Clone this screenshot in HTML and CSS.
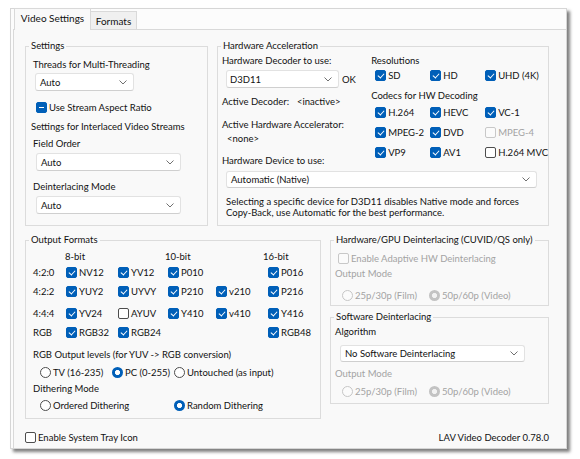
FILE: index.html
```html
<!DOCTYPE html>
<html lang="en">
<head>
<meta charset="utf-8">
<title>LAV Video Decoder</title>
<link rel="stylesheet" href="styles.css">
</head>
<body>
<div class="window">
  <div class="tabs">
    <div class="tab active">Video Settings</div>
    <div class="tab">Formats</div>
  </div>
  <div class="panel">
    <div class="row row-top">
      <fieldset class="grp g-settings">
        <legend>Settings</legend>
        <div class="lbl mt5">Threads for Multi-Threading</div>
        <div class="combo cb-threads"><span>Auto</span><svg class="chev" width="8" height="5" viewBox="0 0 8 5"><path d="M.5.5l3.5 3.5 3.5-3.5"/></svg></div>
        <div class="chk cx-aspect"><span class="box ind"></span>Use Stream Aspect Ratio</div>
        <div class="lbl sub">Settings for Interlaced Video Streams</div>
        <div class="lbl mt3">Field Order</div>
        <div class="combo cb-wide mt2"><span>Auto</span><svg class="chev" width="8" height="5" viewBox="0 0 8 5"><path d="M.5.5l3.5 3.5 3.5-3.5"/></svg></div>
        <div class="lbl mt9">Deinterlacing Mode</div>
        <div class="combo cb-wide mt2"><span>Auto</span><svg class="chev" width="8" height="5" viewBox="0 0 8 5"><path d="M.5.5l3.5 3.5 3.5-3.5"/></svg></div>
      </fieldset>

      <fieldset class="grp g-hw">
        <legend>Hardware Acceleration</legend>
        <div class="hw-top">
          <div class="hw-left">
            <div class="lbl mt1">Hardware Decoder to use:</div>
            <div class="dec-row">
              <div class="combo cb-dec"><span>D3D11</span><svg class="chev" width="8" height="5" viewBox="0 0 8 5"><path d="M.5.5l3.5 3.5 3.5-3.5"/></svg></div>
              <span class="ok">OK</span>
            </div>
            <div class="lbl mt7"><span class="k-dec">Active Decoder:</span>&lt;inactive&gt;</div>
            <div class="lbl mt9">Active Hardware Accelerator:</div>
            <div class="lbl ind5">&lt;none&gt;</div>
            <div class="lbl mt8">Hardware Device to use:</div>
          </div>
          <div class="hw-right">
            <div class="lbl mt1">Resolutions</div>
            <div class="cgrid res">
              <span class="chk"><span class="box on"></span>SD</span>
              <span class="chk"><span class="box on"></span>HD</span>
              <span class="chk"><span class="box on"></span>UHD (4K)</span>
            </div>
            <div class="lbl mt6">Codecs for HW Decoding</div>
            <div class="cgrid codecs">
              <span class="chk"><span class="box on"></span>H.264</span>
              <span class="chk"><span class="box on"></span>HEVC</span>
              <span class="chk"><span class="box on"></span>VC-1</span>
              <span class="chk"><span class="box on"></span>MPEG-2</span>
              <span class="chk"><span class="box on"></span>DVD</span>
              <span class="chk dis"><span class="box dis"></span>MPEG-4</span>
              <span class="chk"><span class="box on"></span>VP9</span>
              <span class="chk"><span class="box on"></span>AV1</span>
              <span class="chk"><span class="box"></span>H.264 MVC</span>
            </div>
          </div>
        </div>
        <div class="combo cb-dev"><span>Automatic (Native)</span><svg class="chev" width="8" height="5" viewBox="0 0 8 5"><path d="M.5.5l3.5 3.5 3.5-3.5"/></svg></div>
        <p class="desc">Selecting a specific device for D3D11 disables Native mode and forces<br>Copy-Back, use Automatic for the best performance.</p>
      </fieldset>
    </div>

    <div class="row row-bottom">
      <fieldset class="grp g-out">
        <legend>Output Formats</legend>
        <div class="orow hdr"><span class="c0"></span><span class="c1">8-bit</span><span class="c2"></span><span class="c3">10-bit</span><span class="c4"></span><span class="c5">16-bit</span></div>
        <div class="orow mt1">
          <span class="c0">4:2:0</span>
          <span class="c1 chk"><span class="box on"></span>NV12</span>
          <span class="c2 chk"><span class="box on"></span>YV12</span>
          <span class="c3 chk"><span class="box on"></span>P010</span>
          <span class="c4"></span>
          <span class="c5 chk"><span class="box on"></span>P016</span>
        </div>
        <div class="orow mt3">
          <span class="c0">4:2:2</span>
          <span class="c1 chk"><span class="box on"></span>YUY2</span>
          <span class="c2 chk"><span class="box on"></span>UYVY</span>
          <span class="c3 chk"><span class="box on"></span>P210</span>
          <span class="c4 chk"><span class="box on"></span>v210</span>
          <span class="c5 chk"><span class="box on"></span>P216</span>
        </div>
        <div class="orow mt6">
          <span class="c0">4:4:4</span>
          <span class="c1 chk"><span class="box on"></span>YV24</span>
          <span class="c2 chk"><span class="box"></span>AYUV</span>
          <span class="c3 chk"><span class="box on"></span>Y410</span>
          <span class="c4 chk"><span class="box on"></span>v410</span>
          <span class="c5 chk"><span class="box on"></span>Y416</span>
        </div>
        <div class="orow mt3">
          <span class="c0">RGB</span>
          <span class="c1 chk"><span class="box on"></span>RGB32</span>
          <span class="c2 chk"><span class="box on"></span>RGB24</span>
          <span class="c3"></span>
          <span class="c4"></span>
          <span class="c5 chk"><span class="box on"></span>RGB48</span>
        </div>
        <div class="lbl mt8">RGB Output levels (for YUV -&gt; RGB conversion)</div>
        <div class="rrow mt2">
          <span class="opt w72"><span class="rad"></span>TV (16-235)</span>
          <span class="opt w62"><span class="rad on"></span>PC (0-255)</span>
          <span class="opt"><span class="rad"></span>Untouched (as input)</span>
        </div>
        <div class="lbl mt2">Dithering Mode</div>
        <div class="rrow mt1">
          <span class="opt w134"><span class="rad"></span>Ordered Dithering</span>
          <span class="opt"><span class="rad on"></span>Random Dithering</span>
        </div>
      </fieldset>

      <div class="rcol">
        <fieldset class="grp g-hwd">
          <legend>Hardware/GPU Deinterlacing (CUVID/QS only)</legend>
          <div class="chk dis cx-adapt"><span class="box dis"></span>Enable Adaptive HW Deinterlacing</div>
          <div class="lbl dis mt1">Output Mode</div>
          <div class="rrow2 mt6">
            <span class="opt dis w87"><span class="rad dis"></span>25p/30p (Film)</span>
            <span class="opt dis"><span class="rad dis on"></span>50p/60p (Video)</span>
          </div>
        </fieldset>
        <fieldset class="grp g-swd">
          <legend>Software Deinterlacing</legend>
          <div class="lbl mt1">Algorithm</div>
          <div class="combo cb-alg"><span>No Software Deinterlacing</span><svg class="chev" width="8" height="5" viewBox="0 0 8 5"><path d="M.5.5l3.5 3.5 3.5-3.5"/></svg></div>
          <div class="lbl dis mt5">Output Mode</div>
          <div class="rrow2 mt2">
            <span class="opt dis w87"><span class="rad dis"></span>25p/30p (Film)</span>
            <span class="opt dis"><span class="rad dis on"></span>50p/60p (Video)</span>
          </div>
        </fieldset>
      </div>
    </div>

    <div class="footer">
      <span class="chk"><span class="box"></span>Enable System Tray Icon</span>
      <span class="ver">LAV Video Decoder 0.78.0</span>
    </div>
  </div>
</div>
</body>
</html>
```

FILE: styles.css
```css
* { box-sizing: border-box; }
html, body { margin: 0; padding: 0; }
body {
  background: #ffffff;
  font-family: "Lato", "Noto Sans", sans-serif;
  font-size: 9.5px;
  color: #111111;
  width: 580px;
  height: 459px;
  overflow: hidden;
}

.window {
  margin: 8px 0 0 10px;
  width: 557px;
  height: 441px;
  border: 1px solid #d6d6d6;
  background: #fcfcfc;
  box-shadow: 3px 3px 3px rgba(0, 0, 0, 0.5);
  display: flex;
  flex-direction: column;
}

.tabs {
  display: flex;
  align-items: flex-end;
  height: 20px;
  padding-left: 3px;
  position: relative;
  z-index: 1;
}
.tab {
  width: 46px;
  height: 18px;
  border: 1px solid #d9d9d9;
  border-bottom: 0;
  border-left: 0;
  background: #f0f0f0;
  text-align: center;
  line-height: 18px;
  font-size: 10px;
}
.tab.active {
  width: 77px;
  height: 22px;
  margin-bottom: -1px;
  border-left: 1px solid #d9d9d9;
  background: #f9f9f9;
  line-height: 19px;
}

.panel {
  margin-left: 2px;
  width: 553px;
  height: 419px;
  border-top: 1px solid #d9d9d9;
  border-left: 1px solid #d9d9d9;
  background: #f9f9f9;
  padding: 9px 17px 0 11px;
  display: flex;
  flex-direction: column;
}

.row { display: flex; gap: 9px; }
.row-top { height: 187px; }
.row-bottom { margin-top: 7px; align-items: flex-start; }

.grp {
  margin: 0;
  padding: 0;
  border: 1px solid #dcdcdc;
  min-width: 0;
}
.grp legend {
  margin-left: 3px;
  padding: 0 2px;
  height: 14px;
  line-height: 14px;
}

.lbl { height: 14px; line-height: 14px; white-space: nowrap; }
.dis { color: #a3a3a3; }
.mt1 { margin-top: 1px; }
.mt2 { margin-top: 2px; }
.mt3 { margin-top: 3px; }
.mt5 { margin-top: 5px; }
.mt6 { margin-top: 6px; }
.mt7 { margin-top: 7px; }
.mt8 { margin-top: 8px; }
.mt9 { margin-top: 9px; }

/* combo boxes */
.combo {
  height: 18px;
  background: #ffffff;
  border: 1px solid #e2e2e2;
  border-bottom-color: #cfcfcf;
  border-radius: 3px;
  display: flex;
  align-items: center;
  justify-content: space-between;
  padding: 0 6px 0 4px;
  white-space: nowrap;
}
.chev { flex: none; }
.chev path { fill: none; stroke: #707070; stroke-width: 1; }

/* checkboxes */
.chk { display: flex; align-items: center; height: 16px; white-space: nowrap; }
.box {
  flex: none;
  position: relative;
  width: 11px;
  height: 11px;
  margin-right: 2px;
  border: 1px solid #4d4d4d;
  border-radius: 2px;
  background: #ffffff;
}
.box.on { background: #005fb8; border-color: #005fb8; }
.box.on::after {
  content: "";
  position: absolute;
  left: 3px;
  top: 1px;
  width: 3px;
  height: 5px;
  border: solid #ffffff;
  border-width: 0 1.2px 1.2px 0;
  transform: rotate(42deg);
}
.box.ind { background: #005fb8; border-color: #005fb8; }
.box.ind::after {
  content: "";
  position: absolute;
  left: 2px;
  top: 4px;
  width: 5px;
  height: 1.3px;
  background: #ffffff;
}
.box.dis { border-color: #c8c8c8; background: #fbfbfb; }

/* radios */
.opt { display: flex; align-items: center; white-space: nowrap; }
.rad {
  flex: none;
  width: 11px;
  height: 11px;
  margin-right: 2px;
  border: 1px solid #4d4d4d;
  border-radius: 50%;
  background: #ffffff;
}
.rad.on { border: none; background: radial-gradient(circle at center, #ffffff 0 2.2px, #005fb8 2.9px); }
.rad.dis { border-color: #c6c6c6; background: #fbfbfb; }
.rad.dis.on { border: none; background: radial-gradient(circle at center, #f2f2f2 0 2.2px, #c3c3c3 2.9px); }

/* Settings group */
.g-settings { width: 183px; padding-left: 7px; }
.g-settings legend { margin-left: -4px; }
.cb-threads { width: 99px; margin: 1px 0 0 2px; }
.cx-aspect { margin: 8px 0 0 3px; height: 16px; }
.sub { margin: 5px 0 0 -2px; }
.cb-wide { width: 145px; margin-left: 3px; }

/* Hardware acceleration group */
.g-hw { width: 332px; padding-left: 4px; }
.g-hw legend { margin-left: -1px; }
.hw-top { display: flex; }
.hw-left { width: 151px; }
.dec-row { display: flex; align-items: center; margin: 2px 0 0 4px; }
.cb-dec { width: 113px; padding-left: 3px; }
.ok { margin-left: 3px; }
.k-dec { display: inline-block; width: 75px; }
.ind5 { padding-left: 5px; }
.cgrid { display: grid; grid-template-columns: 55px 55px auto; margin-left: 4px; }
.res { margin-top: -1px; }
.res .chk { height: 16px; }
.codecs { margin-top: -1px; }
.codecs .chk { height: 20px; }
.cb-dev { width: 311px; height: 17px; margin: 3px 0 0 4px; }
.desc { margin: 8px 0 0 4px; line-height: 11px; white-space: nowrap; }

/* Output formats */
.g-out { width: 296px; padding: 0 0 5px 7px; }
.g-out legend { margin-left: -4px; }
.orow { display: flex; align-items: center; height: 16px; white-space: nowrap; }
.orow.hdr { height: 14px; margin-top: 2px; }
.hdr span { margin-left: -1px; }
.hdr .c0 { margin-left: 0; }
.c0 { width: 33px; flex: none; }
.c1 { width: 52px; flex: none; }
.c2 { width: 50px; flex: none; }
.c3 { width: 48px; flex: none; }
.c4 { width: 52px; flex: none; }
.c5 { flex: none; }
.rrow { display: flex; height: 16px; align-items: center; padding-left: 7px; }
.w72 { width: 72px; }
.w62 { width: 62px; }
.w134 { width: 134px; }

/* right column */
.rcol { width: 219px; display: flex; flex-direction: column; }
.g-hwd { padding: 0 0 2px 4px; }
.g-hwd legend { margin-left: -1px; }
.cx-adapt { margin: 3px 0 0 3px; }
.rrow2 { display: flex; height: 16px; align-items: center; padding-left: 7px; }
.w87 { width: 87px; }
.g-swd { margin-top: 4px; padding: 0 0 4px 4px; }
.g-swd legend { margin-left: -1px; }
.cb-alg { width: 185px; height: 17px; margin: 6px 0 0 5px; }

/* footer */
.footer {
  margin-top: 10px;
  display: flex;
  justify-content: space-between;
  align-items: center;
  height: 16px;
}
```
